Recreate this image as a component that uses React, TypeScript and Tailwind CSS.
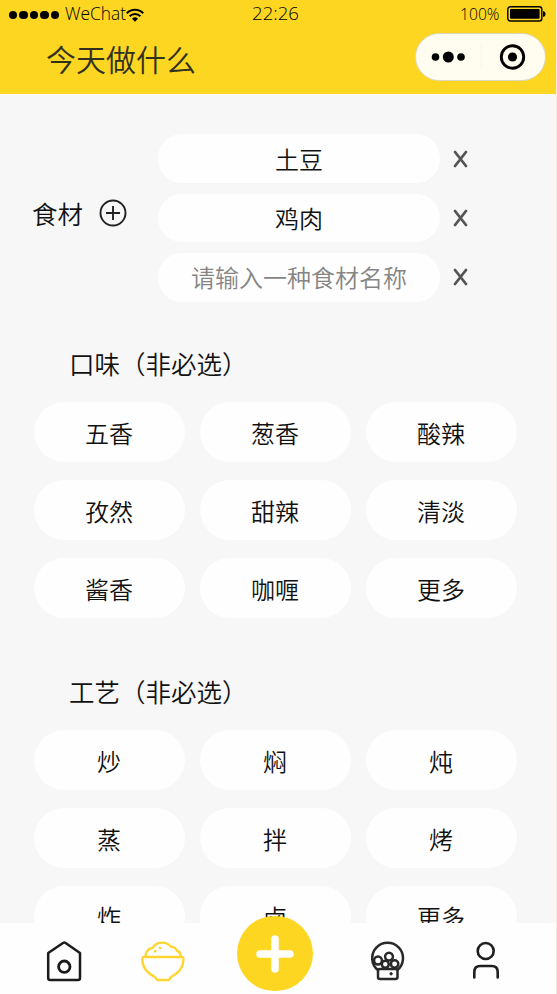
const ingredients = ["土豆", "鸡肉", ""];
const flavors = ["五香", "葱香", "酸辣", "孜然", "甜辣", "清淡", "酱香", "咖喱", "更多"];
const methods = ["炒", "焖", "炖", "蒸", "拌", "烤", "炸", "卤", "更多"];

const StatusBar = () => {
  return (
    <div className="grid grid-cols-3 h-7 pl-[9px] pr-[11px] items-center font-['Open_Sans','Liberation_Sans',sans-serif] font-[350] text-[17px] leading-7">
      <div className="flex items-center">
        <div className="flex gap-[2px] mr-[5px] mt-[2px]">
          {[0, 1, 2, 3, 4].map((i) => (
            <span key={i} className="w-[8.4px] h-[8.4px] rounded-full bg-black" />
          ))}
        </div>
        <svg width="62" height="28">
          <text x="1" y="20" fontSize="17.5" textLength="61" lengthAdjust="spacingAndGlyphs">
            WeChat
          </text>
        </svg>
        <svg width="18" height="14" viewBox="0 0 18 14" className="mt-[2px]" fill="none" stroke="#000" strokeWidth="2">
          <path d="M.8 5.2a11.6 11.6 0 0 1 16.4 0" />
          <path d="M3.6 8.2a7.6 7.6 0 0 1 10.8 0" />
          <path d="M9 13.8 6 10.7a4.3 4.3 0 0 1 6 0z" fill="#000" stroke="none" />
        </svg>
      </div>
      <div className="flex justify-center">
        <svg width="54" height="28">
          <text x="1" y="20" fontSize="19" textLength="47" lengthAdjust="spacingAndGlyphs">
            22:26
          </text>
        </svg>
      </div>
      <div className="flex items-center justify-end">
        <svg width="41" height="28" className="mr-[6px] overflow-visible">
          <text x="0" y="20" textLength="39.5" lengthAdjust="spacingAndGlyphs">
            100%
          </text>
        </svg>
        <svg width="39" height="16" viewBox="0 0 39 16">
          <rect x=".8" y=".8" width="34" height="14.2" rx="2.5" fill="none" stroke="#000" strokeWidth="1.4" />
          <rect x="3" y="3" width="29.6" height="9.8" rx="1" />
          <path d="M36 5c3.4.5 3.4 5.5 0 6z" />
        </svg>
      </div>
    </div>
  );
};

const Capsule = () => {
  return (
    <div className="w-[131px] h-12 mt-[5px] mr-[11px] rounded-full border-[1.5px] border-[#dcd6bd] bg-[#fffcf0] flex items-center">
      <svg width="129" height="46" viewBox="0 0 129 46">
        <circle cx="19.5" cy="23" r="3.8" />
        <circle cx="32.3" cy="23" r="5.5" />
        <circle cx="45" cy="23" r="3.8" />
        <path d="M65 11v24" stroke="#faf7ec" />
        <circle cx="96.5" cy="23" r="11.2" fill="none" stroke="#000" strokeWidth="2.9" />
        <circle cx="96.5" cy="23" r="4.6" />
      </svg>
    </div>
  );
};

type OptionGroupProps = { title: string; options: string[] };

const OptionGroup = ({ title, options }: OptionGroupProps) => {
  return (
    <section className="pl-[34px]">
      <h2 className="h-[38px] pl-[35px] text-[25.5px] leading-[36px] whitespace-nowrap">{title}</h2>
      <div className="mt-[19px] grid grid-cols-[repeat(3,151px)] gap-x-[15px] gap-y-[18px]">
        {options.map((name) => (
          <button key={name} className="h-[60px] rounded-[30px] bg-[#fefefe] text-2xl leading-[60px] pt-px pr-px">
            {name}
          </button>
        ))}
      </div>
    </section>
  );
};

const TabBar = () => {
  return (
    <nav className="relative z-10 h-[71px] shrink-0 bg-[#fefefe]">
      <div className="flex items-start">
        {/* Inicio */}
        <svg width="36" height="42" viewBox="0 0 36 42" className="ml-[46px] mt-[17px]" fill="none" stroke="#1b1b1b" strokeWidth="2.5" strokeLinejoin="round">
          <path d="M2.2 13 17 3q1.3-.8 2.6 0L34 13v25a2 2 0 0 1-2 2H4.2a2 2 0 0 1-2-2z" />
          <circle cx="18.3" cy="26.7" r="5.7" strokeWidth="2.8" />
        </svg>
        {/* Cocinar */}
        <svg width="44" height="42" viewBox="0 0 44 42" className="ml-[59px] mt-[17px]" fill="none" stroke="#fdd633" strokeWidth="2.4" strokeLinecap="round" strokeLinejoin="round">
          <path d="M4.6 16.5C4.3 12.500 6.800 8.500 11.500 8c3.500-6.500 13.700-7.400 18.500-1.200 3.700-.2 5.600 2.400 5.700 4 2.800.5 4 3 3.900 5.700" />
          <path d="M2.3 17h39.2q1 .6 1 2c0 8-4.800 14-12 17.800l-2.700 3.200h-11.500l-2.700-3.200C6 33 1.300 27 1.300 19q0-1.400 1-2z" />
          <circle cx="14" cy="11.2" r="1" fill="#fdd633" strokeWidth="1" />
          <circle cx="19" cy="8" r="1" fill="#fdd633" strokeWidth="1" />
        </svg>
        <button className="-mt-[7px] ml-[52px] w-[76px] h-[75px] rounded-full bg-[#fdd622] flex items-center justify-center">
          <svg width="38" height="38" viewBox="0 0 38 38" stroke="#fff" strokeWidth="7.5" strokeLinecap="round">
            <path d="M19 4v30M4 19h30" />
          </svg>
        </button>
        {/* Máquina de bolas */}
        <svg width="36" height="42" viewBox="0 0 36 42" className="ml-[58px] mt-[17px]" fill="none" stroke="#292929" strokeWidth="2.5">
          <path d="M6.8 30a15.4 15.4 0 1 1 19.6 0" />
          <circle cx="18" cy="16.6" r="3.9" />
          <circle cx="7" cy="20.5" r="3.9" />
          <circle cx="14.3" cy="24.3" r="3.5" />
          <circle cx="23.6" cy="24" r="3.7" />
          <rect x="7" y="29" width="19.5" height="10" rx="2" />
          <circle cx="20.1" cy="33.8" r="1.2" fill="#292929" strokeWidth="1" />
        </svg>
        {/* Perfil */}
        <svg width="30" height="42" viewBox="0 0 30 42" className="ml-[64px] mt-[17px]" fill="none" stroke="#1f1f1f" strokeWidth="2.6" strokeLinecap="round">
          <circle cx="14.7" cy="11" r="8" />
          <path d="M3.3 37.5v-5.500q0-6 6-6h11.400q6 0 6 6v5.500" />
        </svg>
      </div>
    </nav>
  );
};

const App = () => {
  return (
    <div className="w-[557px] h-[994px] overflow-hidden flex flex-col bg-[#f7f7f7] border-r border-[#efece0] text-[#111] font-[350] font-['Noto_Sans_CJK_SC',sans-serif]">
      <header className="-mr-px h-[94px] shrink-0 bg-[#fdd622] text-black">
        <StatusBar />
        <div className="flex justify-between">
          <h1 className="pl-[46px] pt-2 text-[30px] leading-[44px] text-[#33301f]">今天做什么</h1>
          <Capsule />
        </div>
      </header>

      <main className="h-[829px] shrink-0 overflow-hidden pt-10">
        <section className="flex items-center h-[168px] pl-8">
          <span className="text-[25.5px] leading-10 mt-[-11px]">食材</span>
          <svg width="28" height="28" viewBox="0 0 28 28" className="ml-4 mt-[-11px]" fill="none" stroke="#222" strokeWidth="1.9">
            <circle cx="14" cy="14" r="12.5" />
            <path d="M14 7v14M7 14h14" />
          </svg>
          <div className="ml-[31px] flex flex-col gap-[10.5px]">
            {ingredients.map((name, i) => (
              <div key={i} className="flex items-center">
                <input
                  className="w-[282px] h-[48.8px] rounded-3xl bg-[#fefefe] text-center text-2xl pb-px placeholder:text-[#858585]"
                  defaultValue={name}
                  placeholder="请输入一种食材名称"
                />
                <svg width="16" height="18" viewBox="0 0 16 18" className="ml-[13px]" stroke="#555" strokeWidth="2.8" strokeLinecap="round">
                  <path d="M2 2l11 14M13 2 2 16" />
                </svg>
              </div>
            ))}
          </div>
        </section>

        <div className="mt-[43px]">
          <OptionGroup title="口味（非必选）" options={flavors} />
        </div>
        <div className="mt-[55px]">
          <OptionGroup title="工艺（非必选）" options={methods} />
        </div>
      </main>

      <TabBar />
    </div>
  );
};

export default App;
